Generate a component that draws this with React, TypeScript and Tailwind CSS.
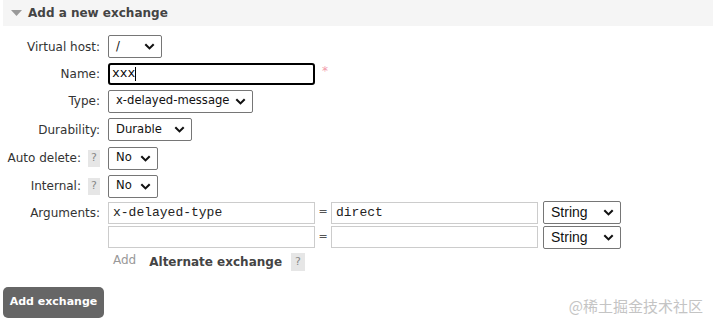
import React from 'react';

const label = "font-['DejaVu_Sans',Verdana,sans-serif] text-[12px] text-[#333]";

function Select({ value, width, font = 'dv' }: { value: string; width: string; font?: 'dv' | 'arial' }) {
  return (
    <div
      className={`${width} h-[23px] flex items-center justify-between border border-[#767676] rounded-[2px] bg-white pl-[7px] pr-[6px] text-[#111] ${
        font === 'arial'
          ? "font-['Liberation_Sans',Arial,sans-serif] text-[14px]"
          : "font-['DejaVu_Sans',Verdana,sans-serif] text-[11.6px]"
      }`}
    >
      <span className="whitespace-nowrap">{value}</span>
      <svg width="11" height="7" viewBox="0 0 11 7" className="shrink-0">
        <path d="M1.3 1.3 L5.5 5.4 L9.7 1.3" fill="none" stroke="#111" strokeWidth="2.1" />
      </svg>
    </div>
  );
}

function Help() {
  return (
    <span className="inline-flex w-[12px] h-[17px] items-center justify-center bg-[#e6e6e6] text-[#888] text-[11px] font-['DejaVu_Sans',sans-serif]">
      ?
    </span>
  );
}

function Row({ name, help, h, children }: { name: string; help?: boolean; h: string; children: React.ReactNode }) {
  return (
    <div className={`flex items-center ${h}`}>
      <div className={`w-[100px] flex items-center justify-end gap-[7px] ${label}`}>
        <span>{name}</span>
        {help && <Help />}
      </div>
      <div className="ml-2 flex items-center">{children}</div>
    </div>
  );
}

function ArgInput({ value }: { value?: string }) {
  return (
    <div className="w-[207px] h-[22px] border border-[#cccccc] bg-white flex items-center pl-[4px] font-['Liberation_Mono','Courier_New',monospace] text-[13px] text-[#222]">
      {value}
    </div>
  );
}

export default function App() {
  return (
    <div className="relative w-[715px] h-[327px] bg-white overflow-hidden">
      <div className="ml-[3px] mr-[2px] h-[26px] bg-[#f5f5f5] flex items-center">
        <svg width="11" height="7" viewBox="0 0 11 7" className="ml-[8px]">
          <path d="M0 0 H11 L5.5 6 Z" fill="#999" />
        </svg>
        <span className="ml-[6px] font-['DejaVu_Sans',Verdana,sans-serif] font-bold text-[12px] text-[#444]">
          Add a new exchange
        </span>
      </div>

      <div className="pt-[7px]">
        <Row name="Virtual host:" h="h-[27px]">
          <Select value="/" width="w-[54px]" />
        </Row>
        <Row name="Name:" h="h-[27px]">
          <div className="w-[207px] h-[22px] border-2 border-black rounded-[3px] flex items-center pl-[2px] font-['Liberation_Mono','Courier_New',monospace] text-[13px] text-black">
            xxx<span className="w-px h-[14px] bg-black" />
          </div>
          <span className="ml-[7px] -mt-[5px] text-[#f29aaa] text-[12px] font-['DejaVu_Sans',sans-serif]">*</span>
        </Row>
        <Row name="Type:" h="h-[28px]">
          <Select value="x-delayed-message" width="w-[145px]" />
        </Row>
        <Row name="Durability:" h="h-[29px]">
          <Select value="Durable" width="w-[84px]" />
        </Row>
        <Row name="Auto delete:" help h="h-[28px]">
          <Select value="No" width="w-[50px]" />
        </Row>
        <Row name="Internal:" help h="h-[28px]">
          <Select value="No" width="w-[50px]" />
        </Row>
        <Row name="Arguments:" h="h-[25px]">
          <ArgInput value="x-delayed-type" />
          <span className="w-[16px] text-center text-[#555] text-[11px] font-['DejaVu_Sans',sans-serif]">=</span>
          <ArgInput value="direct" />
          <div className="ml-[5px]">
            <Select value="String" width="w-[78px]" font="arial" />
          </div>
        </Row>
        <Row name="" h="h-[24px]">
          <ArgInput />
          <span className="w-[16px] text-center text-[#555] text-[11px] font-['DejaVu_Sans',sans-serif]">=</span>
          <ArgInput />
          <div className="ml-[5px]">
            <Select value="String" width="w-[78px]" font="arial" />
          </div>
        </Row>
        <div className="flex items-center h-[26px] pl-[113px] font-['DejaVu_Sans',Verdana,sans-serif]">
          <span className="text-[12px] text-[#999] -mt-[4px]">Add</span>
          <span className="ml-[13px] text-[12px] font-bold text-[#444]">Alternate exchange</span>
          <span className="ml-[9px] inline-flex w-[14px] h-[18px] items-center justify-center bg-[#e6e6e6] text-[#888] text-[11px]">?</span>
        </div>
      </div>

      <button className="mt-[12px] ml-[3px] w-[101px] h-[31px] rounded-[5px] bg-[#666] text-white font-bold text-[11px] font-['DejaVu_Sans',Verdana,sans-serif]">
        Add exchange
      </button>

      <div className="absolute right-[12px] bottom-[14px] text-[15px] text-[#c4c4c4] font-['Noto_Sans_CJK_SC',sans-serif] leading-none">
        @稀土掘金技术社区
      </div>
    </div>
  );
}
